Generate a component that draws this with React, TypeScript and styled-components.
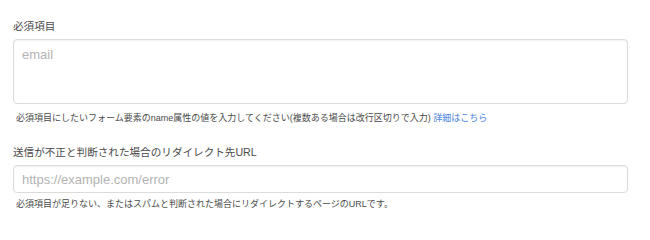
import React from "react";
import styled, { createGlobalStyle } from "styled-components";

const GlobalStyle = createGlobalStyle`
  html, body {
    margin: 0;
    padding: 0;
    background: #ffffff;
  }
  body {
    font-family: "Liberation Sans", "Noto Sans CJK JP", sans-serif;
    color: #4a4a4a;
  }
`;

const Form = styled.div`
  display: flex;
  flex-direction: column;
  padding: 18px 22px 0 13px;
`;

const Field = styled.div<{ gap?: number }>`
  display: flex;
  flex-direction: column;
  margin-top: ${({ gap }) => gap || 0}px;
`;

const Label = styled.label`
  font-size: 10.6px;
  line-height: 16px;
  color: #4a4a4a;
  margin-bottom: 5px;
`;

const controlStyle = `
  box-sizing: border-box;
  width: 100%;
  border: 1px solid #dbdbdb;
  border-radius: 4px;
  box-shadow: inset 0 1px 2px rgba(10, 10, 10, 0.06);
  background: #fff;
  font-family: "Liberation Sans", "Noto Sans CJK JP", sans-serif;
  font-size: 13px;
  line-height: 16px;
  color: #363636;
  outline: none;
  padding: 0 8px;
  &::placeholder {
    color: #b3b3b3;
  }
`;

const TextArea = styled.textarea`
  ${controlStyle}
  height: 65px;
  padding-top: 7px;
  resize: none;
  display: block;
`;

const Input = styled.input`
  ${controlStyle}
  height: 28px;
  display: block;
`;

const Help = styled.p<{ gap: number }>`
  margin: ${({ gap }) => gap}px 0 0;
  padding-left: 3px;
  font-size: 9px;
  line-height: 14px;
  color: #4a4a4a;
  white-space: nowrap;
`;

const Link = styled.a`
  color: #4a87e0;
  text-decoration: none;
`;

export default function App() {
  return (
    <>
      <GlobalStyle />
      <Form>
        <Field>
          <Label>必須項目</Label>
          <TextArea placeholder="email" />
          <Help gap={7}>
            必須項目にしたいフォーム要素のname属性の値を入力してください(複数ある場合は改行区切りで入力){" "}
            <Link href="#">詳細はこちら</Link>
          </Help>
        </Field>
        <Field gap={19}>
          <Label>送信が不正と判断された場合のリダイレクト先URL</Label>
          <Input placeholder="https://example.com/error" />
          <Help gap={4}>
            必須項目が足りない、またはスパムと判断された場合にリダイレクトするページのURLです。
          </Help>
        </Field>
      </Form>
    </>
  );
}
